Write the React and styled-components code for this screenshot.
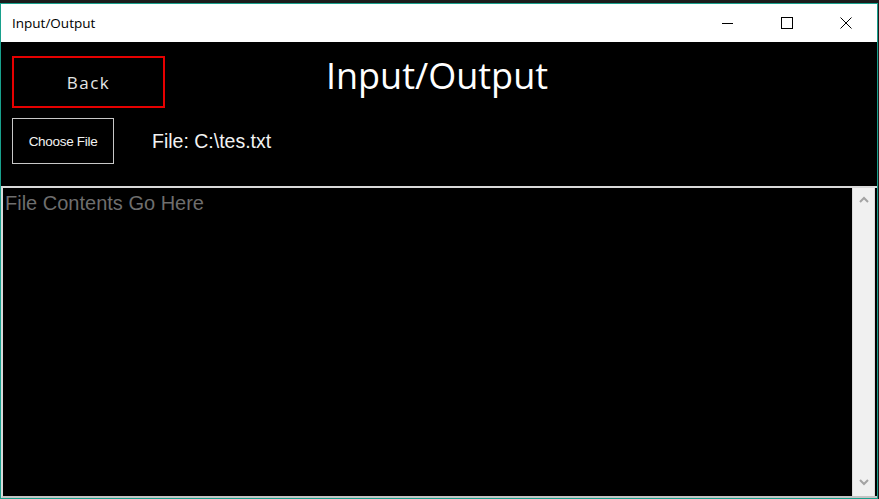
import React from "react"
import styled, { createGlobalStyle } from "styled-components"

const GlobalStyle = createGlobalStyle`
  html, body {
    margin: 0;
    padding: 0;
    background: #1c1c1c;
    overflow: hidden;
  }
  #root { height: 499px; }
`

const App = () => (
  <>
    <GlobalStyle />
    <Desktop>
      <Window>
        <TitleBar>
          <TitleText>Input/Output</TitleText>
          <Controls>
            <ControlButton aria-label="Minimize">
              <svg width="12" height="12" viewBox="0 0 12 12">
                <line x1="0" y1="6.5" x2="11" y2="6.5" stroke="#000" strokeWidth="1" />
              </svg>
            </ControlButton>
            <ControlButton aria-label="Maximize">
              <svg width="12" height="12" viewBox="0 0 12 12">
                <rect x="0.5" y="0.5" width="11" height="11" fill="none" stroke="#000" strokeWidth="1" />
              </svg>
            </ControlButton>
            <ControlButton aria-label="Close">
              <svg width="12" height="12" viewBox="0 0 12 12">
                <path d="M0.5 0.5 L11.5 11.5 M11.5 0.5 L0.5 11.5" stroke="#000" strokeWidth="1" />
              </svg>
            </ControlButton>
          </Controls>
        </TitleBar>

        <Content>
          <HeaderRow>
            <BackButton>Back</BackButton>
            <Heading>Input/Output</Heading>
          </HeaderRow>

          <FileRow>
            <ChooseButton>Choose File</ChooseButton>
            <FileLabel>File: C:\tes.txt</FileLabel>
          </FileRow>

          <ContentsBox>
            <Placeholder>File Contents Go Here</Placeholder>
            <ScrollBar>
              <svg width="10" height="7" viewBox="0 0 10 7">
                <path d="M1 6 L5 2 L9 6" fill="none" stroke="#a3a3a3" strokeWidth="2" />
              </svg>
              <svg width="10" height="7" viewBox="0 0 10 7">
                <path d="M1 1 L5 5 L9 1" fill="none" stroke="#a3a3a3" strokeWidth="2" />
              </svg>
            </ScrollBar>
          </ContentsBox>
        </Content>
      </Window>
    </Desktop>
  </>
)

export default App


const Desktop = styled.div`
  height: 499px;
  padding-top: 3px;
  box-sizing: border-box;
`

const Window = styled.div`
  width: 878px;
  height: 496px;
  box-sizing: border-box;
  border: 1px solid #18a08c;
  display: flex;
  flex-direction: column;
  background: #000;
`

const TitleBar = styled.div`
  height: 38px;
  background: #fff;
  display: flex;
  align-items: center;
  justify-content: space-between;
`

const TitleText = styled.span`
  font-family: "Open Sans", "Noto Sans", sans-serif;
  font-size: 13.5px;
  color: #000;
  padding-left: 11px;
`

const Controls = styled.div`
  display: flex;
  height: 100%;
  margin-right: 2px;
`

const ControlButton = styled.div`
  width: 59px;
  height: 100%;
  display: flex;
  align-items: center;
  justify-content: center;
`

const Content = styled.div`
  flex: 1;
  display: flex;
  flex-direction: column;
  background: #000;
`

const HeaderRow = styled.div`
  display: grid;
  grid-template-columns: 1fr auto 1fr;
  align-items: start;
  padding: 14px 0 0 11px;
`

const BackButton = styled.div`
  width: 153px;
  height: 52px;
  box-sizing: border-box;
  border: 2px solid #e60000;
  display: flex;
  align-items: center;
  justify-content: center;
  font-family: "Open Sans", "Noto Sans", sans-serif;
  font-size: 17px;
  letter-spacing: 1.5px;
  color: #e6e6e6;
  justify-self: start;
`

const Heading = styled.h1`
  margin: -5px 0 0 -15px;
  font-family: "Open Sans", "Noto Sans", sans-serif;
  font-weight: 400;
  font-size: 36px;
  line-height: 50px;
  color: #fff;
`

const FileRow = styled.div`
  display: flex;
  align-items: center;
  gap: 38px;
  padding: 10px 0 0 11px;
  height: 46px;
`

const ChooseButton = styled.div`
  width: 102px;
  height: 46px;
  box-sizing: border-box;
  border: 1px solid #c8c8c8;
  display: flex;
  align-items: center;
  justify-content: center;
  font-family: "Liberation Sans", Arial, sans-serif;
  font-size: 13.5px;
  letter-spacing: -0.3px;
  color: #f2f2f2;
`

const FileLabel = styled.span`
  font-family: "Liberation Sans", Arial, sans-serif;
  font-size: 19.5px;
  color: #f2f2f2;
`

const ContentsBox = styled.div`
  margin-top: 22px;
  flex: 1;
  display: flex;
  border-top: 2px solid #d9d9d9;
  border-left: 2px solid #d9d9d9;
  border-bottom: 2px solid #c4c4c4;
  background: #000;
`

const Placeholder = styled.div`
  flex: 1;
  font-family: "Liberation Sans", Arial, sans-serif;
  font-size: 20px;
  color: #6e6e6e;
  padding: 4px 0 0 2px;
  border-right: 1px solid #dcdcdc;
`

const ScrollBar = styled.div`
  width: 21px;
  background: #f0f0f0;
  display: flex;
  flex-direction: column;
  justify-content: space-between;
  align-items: center;
  padding: 8px 0 10px;
  margin-right: 2px;
  border-right: 1px solid #dcdcdc;
`
